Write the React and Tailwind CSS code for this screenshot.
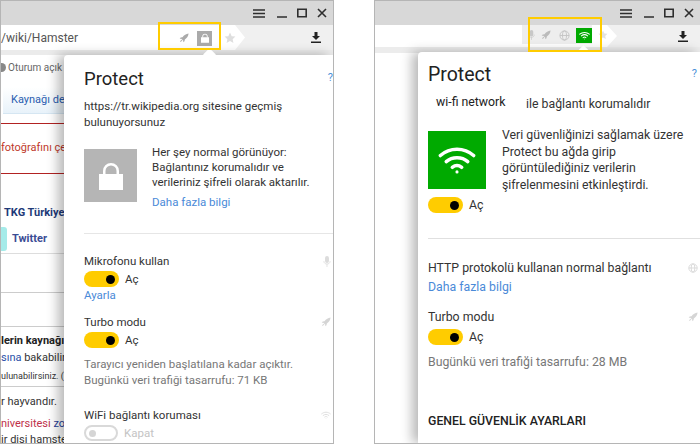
// Two browser windows showing the Protect popup
const font = { fontFamily: 'Roboto, "Noto Sans", sans-serif' }

const Rocket = ({ className }) => (
  <svg viewBox="0 0 12 12" className={className} fill="currentColor">
    <path d="M11.5.5C8.5.8 6 2.400 4.200 5L2 5.400.8 7l2-.2 2.400 2.400-.2 2 1.600-1.200.4-2.200C9.600 6 11.200 3.500 11.500.5z" />
    <path d="M2.600 8 1 11l3-1.600z" />
  </svg>
)

const Lock = ({ className }) => (
  <svg viewBox="0 0 24 28" className={className} fill="currentColor">
    <path d="M0 12h24v16H0z" />
    <path d="M4 13V9a8 8 0 0 1 16 0v4h-2.500V9a5.500 5.500 0 0 0-11 0v4z" />
  </svg>
)

const Wifi = ({ className }) => (
  <svg viewBox="0 0 24 18" className={className} fill="none" stroke="currentColor" strokeWidth="2.200" strokeLinecap="round">
    <path d="M1.500 6.200C7.500.9 16.500.9 22.500 6.200" />
    <path d="M5.200 10C9 6.700 15 6.700 18.800 10" />
    <path d="M9 13.600c1.800-1.400 4.200-1.400 6 0" />
    <circle cx="12" cy="16.500" r="1" fill="currentColor" stroke="none" />
  </svg>
)

const Globe = ({ className }) => (
  <svg viewBox="0 0 12 12" className={className} fill="none" stroke="currentColor" strokeWidth="1">
    <circle cx="6" cy="6" r="5" />
    <ellipse cx="6" cy="6" rx="2.200" ry="5" />
    <path d="M1 6h10" />
  </svg>
)

const Mic = ({ className }) => (
  <svg viewBox="0 0 10 14" className={className} fill="currentColor">
    <rect x="2.500" y="0" width="5" height="9" rx="2.500" />
    <path d="M1 6.500c0 5 8 5 8 0M5 10v4" fill="none" stroke="currentColor" />
  </svg>
)

const Star = ({ className }) => (
  <svg viewBox="0 0 20 20" className={className} fill="currentColor">
    <path d="M10 1l2.800 6 6.200.7-4.600 4.200 1.300 6.300L10 15l-5.700 3.200 1.300-6.300L1 7.700 7.200 7z" />
  </svg>
)

const TitleBar = () => (
  <div className="h-[24px] shrink-0 bg-[#d8d8d8] flex items-center justify-end gap-[9px] pr-[6px] text-[#2e2e2e]">
    <svg viewBox="0 0 12 9" className="w-[12px] h-[9px]" stroke="currentColor" strokeWidth="1.400">
      <path d="M0 1h12M0 4.500h12M0 8h12" />
    </svg>
    <svg viewBox="0 0 10 10" className="w-[10px] h-[10px] ml-[3px]" stroke="currentColor" strokeWidth="1.500">
      <path d="M0 9h10" />
    </svg>
    <svg viewBox="0 0 10 10" className="w-[10px] h-[10px] ml-[1px]" fill="none" stroke="currentColor" strokeWidth="1.600">
      <path d="M.8 1.200h8.400v7.600H.8z" />
    </svg>
    <svg viewBox="0 0 10 10" className="w-[10px] h-[10px] ml-[1px]" stroke="currentColor" strokeWidth="1.600">
      <path d="M1 1l8 8M9 1l-8 8" />
    </svg>
  </div>
)

const DownloadIcon = () => (
  <svg viewBox="0 0 10 11" className="w-[10px] h-[11px] text-[#222]" fill="currentColor">
    <path d="M3.500 0h3v4H9L5 8 1 4h2.500zM0 9.600h10V11H0z" />
  </svg>
)

const Toggle = ({ on, label }) => (
  <div className="flex items-center gap-[6px]">
    {on ? (
      <div className="w-[35px] h-[16px] rounded-full bg-[#ffcc00] flex items-center justify-end pr-[4px]">
        <div className="w-[9px] h-[9px] rounded-full bg-black" />
      </div>
    ) : (
      <div className="w-[34px] h-[16px] rounded-full border-2 border-[#d9d9d9] bg-white flex items-center pl-[3px]">
        <div className="w-[7px] h-[7px] rounded-full bg-[#d5d5d5]" />
      </div>
    )}
    <span className={on ? 'leading-[16px] text-[#333]' : 'leading-[16px] text-[#c4c4c4]'}>{label}</span>
  </div>
)

const LeftPage = () => (
  <div className="text-[#333] overflow-hidden">
    <div className="h-[5px] bg-[#ebebeb]" />
    <div className="h-[18px] mt-[1px] flex items-end gap-[2px] text-[10px] leading-[12px] text-[#666]">
      <div className="w-[5px] h-[9px] mb-[2px] rounded-r-full bg-[#888]" />
      <span>Oturum açık d</span>
    </div>
    <div className="h-[27px] mt-[13px] ml-[2px] pl-[8px] flex items-center text-[11px] text-[#2a5db0] border-b border-[#d5e6f2] bg-gradient-to-b from-white to-[#e8f2fa]">Kaynağı değ</div>
    <div className="h-[10px] border-b border-[#b22222]" />
    <div className="h-[50px] border-b border-[#b22222] text-[11px] leading-[48px] text-[#c0392b] whitespace-nowrap">fotoğrafını çe</div>
    <div className="mt-[32px] pl-[3px] text-[11px] leading-[14px] font-bold text-[#1e3a78] whitespace-nowrap">TKG Türkiye</div>
    <div className="mt-[7px] flex h-[27px] border-b border-[#ddd]">
      <div className="w-[6px] h-[24px] bg-[#a5ebe9] rounded-r-[3px]" />
      <span className="ml-[5px] mt-[5px] text-[11px] leading-[14px] font-bold text-[#3a4c94]">Twitter</span>
    </div>
    <div className="h-[39px] border-b border-[#ccc]" />
    <div className="h-[34px] border-b border-[#ccc]" />
    <div className="mt-[7px] text-[11px] leading-[14px] font-bold text-[#222] whitespace-nowrap">lerin kaynağı</div>
    <div className="mt-[3px] text-[11px] leading-[14px] whitespace-nowrap">
      <span className="text-[#2a4fa8]">sına</span> bakabilirs
    </div>
    <div className="mt-[5px] h-[17px] border-b border-[#ccc] text-[9px] leading-[12px] whitespace-nowrap">ulunabilirsiniz. (</div>
    <div className="mt-[8px] text-[11px] leading-[14px] whitespace-nowrap">r hayvandır.</div>
    <div className="mt-[8px] text-[11px] leading-[14px] whitespace-nowrap">
      <span className="text-[#c0304a]">niversitesi</span> <span className="text-[#2a3f9a]">zoo</span>
    </div>
    <div className="mt-[2px] text-[11px] leading-[14px] whitespace-nowrap">ir dişi hamste</div>
  </div>
)

const LeftPopup = () => (
  <div className="absolute left-[63px] right-0 top-[54px] bottom-0 bg-white shadow-[-6px_0_12px_rgba(0,0,0,0.28)] rounded-tl-[4px] pl-[20px] text-[11.500px] leading-[16px] text-[#333]">
    <div className="absolute -top-[5px] left-[141px] w-[9px] h-[9px] rotate-45 bg-white" />
    <div className="flex justify-between items-start pt-[11px]">
      <span className="text-[18.500px] leading-[26px] text-[#222]">Protect</span>
      <span className="text-[11px] text-[#4a90d9] mt-[4px]">?</span>
    </div>
    <p className="mt-[6px] whitespace-nowrap">https://tr.wikipedia.org sitesine geçmiş<br />bulunuyorsunuz</p>
    <div className="flex gap-[15px] mt-[19px]">
      <div className="w-[53px] h-[53px] bg-[#b5b5b5] flex items-center justify-center shrink-0">
        <Lock className="w-[24px] h-[32px] text-white" />
      </div>
      <div className="-mt-[4px] leading-[15px] whitespace-nowrap">
        <p>Her şey normal görünüyor:<br />Bağlantınız korumalıdır ve<br />verileriniz şifreli olarak aktarılır.</p>
        <p className="mt-[4px] text-[#4a8ad8] leading-[16px]">Daha fazla bilgi</p>
      </div>
    </div>
    <div className="h-px bg-[#e6e6e6] mt-[23px]" />
    <div className="flex justify-between items-center mt-[19px] pr-[2px]">
      <span>Mikrofonu kullan</span>
      <Mic className="w-[8px] h-[11px] text-[#dcdcdc]" />
    </div>
    <div className="mt-[2px]"><Toggle on label="Aç" /></div>
    <p className="text-[#4a8ad8]">Ayarla</p>
    <div className="flex justify-between items-center mt-[11px] pr-[2px]">
      <span>Turbo modu</span>
      <Rocket className="w-[10px] h-[10px] text-[#d5d5d5]" />
    </div>
    <div className="mt-[2px]"><Toggle on label="Aç" /></div>
    <p className="mt-[8px] text-[#777]">Tarayıcı yeniden başlatılana kadar açıktır.<br />Bugünkü veri trafiği tasarrufu: 71 KB</p>
    <div className="flex justify-between items-center mt-[19px] pr-[2px]">
      <span>WiFi bağlantı koruması</span>
      <Wifi className="w-[10px] h-[8px] text-[#dcdcdc]" />
    </div>
    <div className="mt-[2px]"><Toggle label="Kapat" /></div>
  </div>
)

const RightPopup = () => (
  <div className="absolute left-[43px] right-0 top-[51px] bottom-0 bg-white shadow-[-6px_0_12px_rgba(0,0,0,0.28)] rounded-tl-[4px] pl-[10px] text-[12.300px] leading-[16px] text-[#333]">
    <div className="absolute -top-[5px] left-[161px] w-[9px] h-[9px] rotate-45 bg-white" />
    <div className="flex justify-between items-start pt-[10px] pr-[3px]">
      <span className="text-[19.500px] leading-[26px] text-[#222]">Protect</span>
      <span className="text-[11px] text-[#4a90d9] mt-[4px]">?</span>
    </div>
    <div className="flex items-start mt-[6px]">
      <span className="ml-[8px] w-[90px] text-[#222]">wi-fi network</span>
      <span className="mt-[2px]">ile bağlantı korumalıdır</span>
    </div>
    <div className="flex gap-[16px] mt-[19px]">
      <div className="w-[58px] h-[58px] bg-[#00aa00] flex items-center justify-center shrink-0">
        <Wifi className="w-[38px] h-[30px] text-white" />
      </div>
      <p className="-mt-[4px] leading-[16.500px] whitespace-nowrap">Veri güvenliğinizi sağlamak üzere<br />Protect bu ağda girip<br />görüntülediğiniz verilerin<br />şifrelenmesini etkinleştirdi.</p>
    </div>
    <div className="mt-[4px]"><Toggle on label="Aç" /></div>
    <div className="h-px bg-[#e0e0e0] mt-[25px]" />
    <div className="flex justify-between items-center mt-[21px] pr-[2px]">
      <span>HTTP protokolü kullanan normal bağlantı</span>
      <Globe className="w-[10px] h-[10px] text-[#d5d5d5]" />
    </div>
    <p className="mt-[3px] text-[#4a8ad8]">Daha fazla bilgi</p>
    <div className="flex justify-between items-center mt-[14px] pr-[2px]">
      <span>Turbo modu</span>
      <Rocket className="w-[10px] h-[10px] text-[#d5d5d5]" />
    </div>
    <div className="mt-[4px]"><Toggle on label="Aç" /></div>
    <p className="mt-[9px] text-[#777]">Bugünkü veri trafiği tasarrufu: 28 MB</p>
    <p className="mt-[43px] text-[#222] font-medium">GENEL GÜVENLİK AYARLARI</p>
  </div>
)

const App = () => {
  return (
    <div className="w-[700px] h-[444px] bg-white flex overflow-hidden" style={font}>
      {/* left window */}
      <div className="relative w-[334px] h-[444px] border border-[#b5b5b5] overflow-hidden flex flex-col">
        <TitleBar />
        <div className="h-[25px] shrink-0 flex bg-[#f0f0f0]">
          <div className="w-[244px] bg-white [clip-path:polygon(0_0,234px_0,244px_50%,234px_100%,0_100%)] flex items-center justify-between text-[12px] text-[#555] shrink-0 pr-[9px] pt-[1px]">
            <span className="whitespace-nowrap">/wiki/Hamster</span>
            <div className="flex items-center gap-[8px]">
              <Rocket className="w-[10px] h-[10px] text-[#aaa]" />
              <div className="w-[15px] h-[15px] bg-[#aaa] flex items-center justify-center">
                <Lock className="w-[8px] h-[10px] text-white" />
              </div>
              <Star className="ml-[4px] w-[12px] h-[12px] text-[#dedede]" />
            </div>
          </div>
          <div className="ml-auto mr-[12px] flex items-center"><DownloadIcon /></div>
        </div>
        <LeftPage />
        <LeftPopup />
        <div className="absolute left-[157px] top-[21px] w-[63px] h-[28px] border-2 border-[#ffcc00]" />
      </div>

      <div className="w-[40px] shrink-0" />

      {/* right window */}
      <div className="relative flex-1 h-[444px] border-t border-b border-l border-[#b5b5b5] overflow-hidden flex flex-col">
        <TitleBar />
        <div className="h-[22px] shrink-0 flex bg-[#f0f0f0]">
          <div className="w-[242px] bg-white [clip-path:polygon(0_0,232px_0,242px_50%,232px_100%,0_100%)] flex items-start justify-end shrink-0 pr-[9px]">
            <div className="h-[19px] pl-[6px] pt-[1px] bg-[#eeeeee] flex items-center gap-[6px]">
              <Mic className="w-[7px] h-[10px] text-[#c8c8c8]" />
              <Rocket className="w-[10px] h-[10px] text-[#bbb]" />
              <Globe className="ml-[2px] w-[11px] h-[11px] text-[#c4c4c4]" />
              <div className="w-[16px] h-[15px] bg-[#00aa00] flex items-center justify-center">
                <Wifi className="w-[11px] h-[9px] text-white" />
              </div>
            </div>
            <Star className="ml-[6px] mt-[5px] w-[10px] h-[10px] text-[#e2e2e2]" />
          </div>
          <div className="ml-auto mr-[12px] flex items-center"><DownloadIcon /></div>
        </div>
        <div className="h-[6px] shrink-0 bg-[#ececec]" />
        <RightPopup />
        <div className="absolute left-[153px] top-[16px] w-[74px] h-[35px] border-2 border-[#ffcc00]" />
      </div>
    </div>
  )
}

export default App
